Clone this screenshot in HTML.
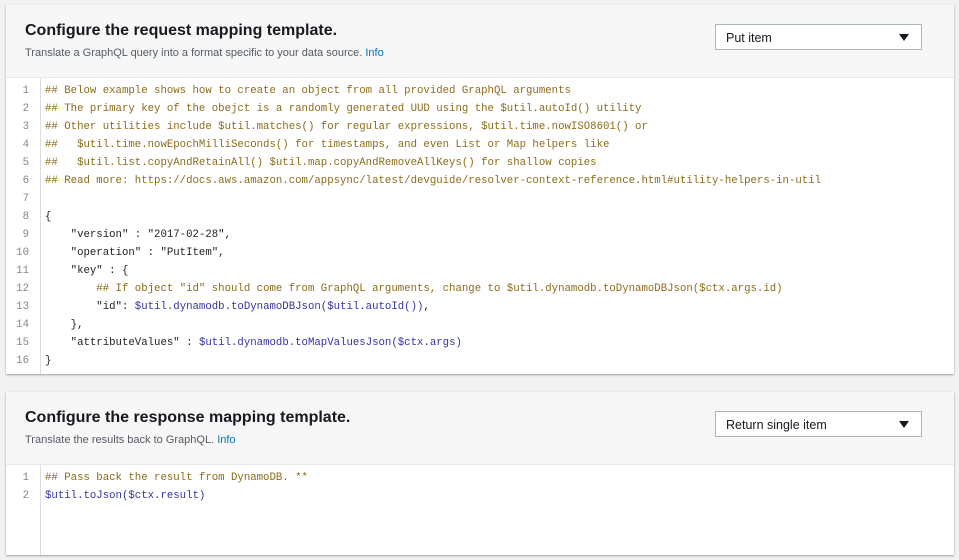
<!DOCTYPE html>
<html><head><meta charset="utf-8"><style>
body{margin:0;width:959px;height:560px;background:#f2f2f2;font-family:"Liberation Sans",sans-serif;position:relative;overflow:hidden}
.panel{position:absolute;left:6px;width:948px;background:#fff;box-shadow:0 1px 2px rgba(0,0,0,.35)}
.hd{background:#f7f7f7;border-bottom:1px solid #eaeaea;position:relative}
h2{position:absolute;left:19px;margin:0;font-size:16px;font-weight:bold;color:#16191f}
.sub{position:absolute;left:19px;font-size:11px;color:#545b64}
.sub a{color:#0073bb}
.sel{position:absolute;left:709px;width:207px;height:26px;border:1px solid #aab7b8;background:#fff;font-size:12.5px;color:#16191f;box-sizing:border-box;padding:6px 0 0 10px}
.sel i{position:absolute;right:12px;top:9px;width:0;height:0;border-left:5px solid transparent;border-right:5px solid transparent;border-top:7px solid #16191f}
.code{position:relative;font-family:"Liberation Mono",monospace;font-size:10.7px;line-height:18px;color:#222}
.gut{position:absolute;left:0;top:0;bottom:0;width:34px;border-right:1px solid #ddd;color:#888;text-align:right}
.gut div{padding-right:11px}
.txt{position:absolute;left:39px;top:0;white-space:pre}
.c{color:#8c6c1a}.v{color:#3333a0}
</style></head><body>
<div class="panel" style="top:5px;height:369px">
 <div class="hd" style="height:72px">
  <h2 style="top:17px">Configure the request mapping template.</h2>
  <div class="sub" style="top:42px">Translate a GraphQL query into a format specific to your data source. <a>Info</a></div>
  <div class="sel" style="top:19px">Put item<i></i></div>
 </div>
 <div class="code" style="height:296px">
  <div class="gut" style="padding-top:4px"><div>1</div><div>2</div><div>3</div><div>4</div><div>5</div><div>6</div><div>7</div><div>8</div><div>9</div><div>10</div><div>11</div><div>12</div><div>13</div><div>14</div><div>15</div><div>16</div></div>
  <div class="txt" style="top:4px"><span class="c">## Below example shows how to create an object from all provided GraphQL arguments</span>
<span class="c">## The primary key of the obejct is a randomly generated UUD using the $util.autoId() utility</span>
<span class="c">## Other utilities include $util.matches() for regular expressions, $util.time.nowISO8601() or</span>
<span class="c">##   $util.time.nowEpochMilliSeconds() for timestamps, and even List or Map helpers like</span>
<span class="c">##   $util.list.copyAndRetainAll() $util.map.copyAndRemoveAllKeys() for shallow copies</span>
<span class="c">## Read more: https://docs.aws.amazon.com/appsync/latest/devguide/resolver-context-reference.html#utility-helpers-in-util</span>

{
    "version" : "2017-02-28",
    "operation" : "PutItem",
    "key" : {
        <span class="c">## If object "id" should come from GraphQL arguments, change to $util.dynamodb.toDynamoDBJson($ctx.args.id)</span>
        "id": <span class="v">$util.dynamodb.toDynamoDBJson($util.autoId())</span>,
    },
    "attributeValues" : <span class="v">$util.dynamodb.toMapValuesJson($ctx.args)</span>
}</div>
 </div>
</div>
<div class="panel" style="top:392px;height:163px">
 <div class="hd" style="height:72px">
  <h2 style="top:17px">Configure the response mapping template.</h2>
  <div class="sub" style="top:42px">Translate the results back to GraphQL. <a>Info</a></div>
  <div class="sel" style="top:19px">Return single item<i></i></div>
 </div>
 <div class="code" style="height:90px">
  <div class="gut" style="padding-top:4px"><div>1</div><div>2</div></div>
  <div class="txt" style="top:4px"><span class="c">## Pass back the result from DynamoDB. **</span>
<span class="v">$util.toJson($ctx.result)</span></div>
 </div>
</div>
</body></html>
